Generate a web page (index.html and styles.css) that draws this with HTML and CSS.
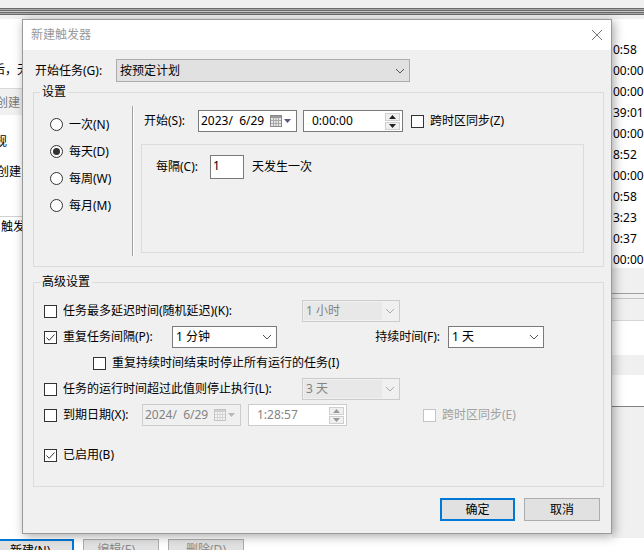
FILE: index.html
```html
<!DOCTYPE html>
<html lang="zh-CN">
<head>
<meta charset="utf-8">
<title>新建触发器</title>
<link rel="stylesheet" href="styles.css">
</head>
<body>
<div class="bgwin">
  <div class="bg-top"><div class="bg-stripes"></div></div>
  <div class="bg-left">
    <span class="bl bl-1">后，无</span>
    <div class="bl-band"><span>创建</span></div>
    <span class="bl bl-3">规</span>
    <span class="bl bl-4">创建</span>
    <div class="bl-line"></div>
    <span class="bl bl-5">触发</span>
  </div>
  <div class="bg-right">
    <span>0:58</span><span>00:00</span><span>00:00</span><span>39:01</span><span>00:00</span><span>8:52</span><span>00:00</span><span>0:58</span><span>3:23</span><span>0:37</span><span>00:00</span>
  </div>
  <div class="bg-right-lower">
    <div class="brl-line1"></div>
    <div class="brl-line2"></div>
    <div class="brl-white1"></div>
    <div class="brl-white2"></div>
  </div>
  <div class="bg-buttons">
    <div class="bgbtn bgbtn-default">新建(N)...</div>
    <div class="bgbtn">编辑(E)...</div>
    <div class="bgbtn">删除(D)</div>
  </div>
</div>

<div class="dialog">
  <div class="titlebar">
    <span class="title">新建触发器</span>
    <svg class="close" width="12" height="12" viewBox="0 0 12 12"><path d="M1 1L11 11M11 1L1 11" stroke="#777" stroke-width="1" fill="none"/></svg>
  </div>
  <div class="dlg-body">
    <div class="start-row">
      <span class="start-label">开始任务(G):</span>
      <div class="combo combo-main"><span class="combo-text">按预定计划</span><svg class="chev" width="10" height="6" viewBox="0 0 10 6"><path d="M1 1L5 5L9 1" stroke="#555" fill="none"/></svg></div>
    </div>

    <fieldset class="group group-settings">
      <legend>设置</legend>
      <div class="settings">
        <div class="freq">
          <div class="radio-row"><span class="radio"></span><span>一次(N)</span></div>
          <div class="radio-row"><span class="radio on"></span><span>每天(D)</span></div>
          <div class="radio-row"><span class="radio"></span><span>每周(W)</span></div>
          <div class="radio-row"><span class="radio"></span><span>每月(M)</span></div>
        </div>
        <div class="sep"></div>
        <div class="sched">
          <div class="sched-start">
            <span class="lbl-start">开始(S):</span>
            <div class="datebox">
              <span class="dt-text">2023/&nbsp; 6/29</span>
              <svg class="cal" width="22" height="12" viewBox="0 0 22 12"><rect x="0.5" y="0.5" width="11" height="11" fill="#e8e8e8" stroke="#8a8a8a"/><rect x="1" y="1" width="10" height="2" fill="#9a9a9a"/><path d="M1 5.5H11M1 8.5H11M3.5 3V11M6 3V11M8.5 3V11" stroke="#a8a8a8" stroke-width="1"/><path d="M14 4H21L17.5 8Z" fill="#4e5d7c"/></svg>
            </div>
            <div class="timebox">
              <span class="dt-text">0:00:00</span>
              <div class="spin"><span class="spin-btn"><svg width="7" height="4" viewBox="0 0 7 4"><path d="M0 4H7L3.5 0Z" fill="#222"/></svg></span><span class="spin-btn"><svg width="7" height="4" viewBox="0 0 7 4"><path d="M0 0H7L3.5 4Z" fill="#222"/></svg></span></div>
            </div>
            <span class="check ml-tz"></span>
            <span class="ck-label">跨时区同步(Z)</span>
          </div>
          <div class="recur">
            <div class="recur-row">
              <span class="lbl-every">每隔(C):</span>
              <div class="numbox">1</div>
              <span class="recur-tail">天发生一次</span>
            </div>
          </div>
        </div>
      </div>
    </fieldset>

    <fieldset class="group group-adv">
      <legend>高级设置</legend>
      <div class="adv">
        <div class="adv-row">
          <span class="check"></span>
          <span class="ck-label w239">任务最多延迟时间(随机延迟)(K):</span>
          <div class="combo combo-dis w98"><span class="combo-field">1 小时</span><svg class="chev" width="10" height="6" viewBox="0 0 10 6"><path d="M1 1L5 5L9 1" stroke="#aaa" fill="none"/></svg></div>
        </div>
        <div class="adv-row">
          <span class="check"><svg width="11" height="11" viewBox="0 0 11 11"><path d="M1.5 5.5L4.2 8.3L9.5 2.5" stroke="#333" fill="none" stroke-width="1"/></svg></span>
          <span class="ck-label w109">重复任务间隔(P):</span>
          <div class="combo combo-on w105"><span class="combo-text">1 分钟</span><svg class="chev" width="10" height="6" viewBox="0 0 10 6"><path d="M1 1L5 5L9 1" stroke="#555" fill="none"/></svg></div>
          <span class="dur-label">持续时间(F):</span>
          <div class="combo combo-on w96"><span class="combo-text">1 天</span><svg class="chev" width="10" height="6" viewBox="0 0 10 6"><path d="M1 1L5 5L9 1" stroke="#555" fill="none"/></svg></div>
        </div>
        <div class="adv-row">
          <span class="check ml-sub"></span>
          <span class="ck-label">重复持续时间结束时停止所有运行的任务(I)</span>
        </div>
        <div class="adv-row">
          <span class="check"></span>
          <span class="ck-label w239">任务的运行时间超过此值则停止执行(L):</span>
          <div class="combo combo-dis w98"><span class="combo-field">3 天</span><svg class="chev" width="10" height="6" viewBox="0 0 10 6"><path d="M1 1L5 5L9 1" stroke="#aaa" fill="none"/></svg></div>
        </div>
        <div class="adv-row">
          <span class="check"></span>
          <span class="ck-label w79">到期日期(X):</span>
          <div class="datebox dis">
            <span class="dt-text">2024/&nbsp; 6/29</span>
            <svg class="cal" width="22" height="12" viewBox="0 0 22 12"><rect x="0.5" y="0.5" width="11" height="11" fill="#f4f4f4" stroke="#c4c4c4"/><rect x="1" y="1" width="10" height="2" fill="#cfcfcf"/><path d="M1 5.5H11M1 8.5H11M3.5 3V11M6 3V11M8.5 3V11" stroke="#d4d4d4" stroke-width="1"/><path d="M14 4H21L17.5 8Z" fill="#b8b8b8"/></svg>
          </div>
          <div class="timebox dis">
            <span class="dt-text">1:28:57</span>
            <div class="spin"><span class="spin-btn"><svg width="7" height="4" viewBox="0 0 7 4"><path d="M0 4H7L3.5 0Z" fill="#999"/></svg></span><span class="spin-btn"><svg width="7" height="4" viewBox="0 0 7 4"><path d="M0 0H7L3.5 4Z" fill="#999"/></svg></span></div>
          </div>
          <span class="check dis ml-exp"></span>
          <span class="ck-label dis-text">跨时区同步(E)</span>
        </div>
        <div class="adv-row enabled-row">
          <span class="check"><svg width="11" height="11" viewBox="0 0 11 11"><path d="M1.5 5.5L4.2 8.3L9.5 2.5" stroke="#333" fill="none" stroke-width="1"/></svg></span>
          <span class="ck-label">已启用(B)</span>
        </div>
      </div>
    </fieldset>

    <div class="btn-row">
      <div class="btn btn-default">确定</div>
      <div class="btn">取消</div>
    </div>
  </div>
</div>
</body>
</html>
```

FILE: styles.css
```css
* { box-sizing: border-box; }
body {
  margin: 0;
  width: 644px;
  height: 550px;
  overflow: hidden;
  position: relative;
  background: #ffffff;
  font-family: "Noto Sans", "Noto Sans CJK SC", sans-serif;
  font-size: 12px;
  line-height: 16px;
  color: #000;
}

/* ---------- background window ---------- */
.bgwin { position: absolute; left: 0; top: 0; width: 644px; height: 550px; }
.bg-top { height: 19px; background: #f0f0f0; padding-top: 8px; }
.bg-stripes {
  height: 7px;
  background: repeating-linear-gradient(#6b6b6b 0 1px, #a8a8a8 1px 2px, #6b6b6b 2px 3px, #c8c8c8 3px 4px);
}
.bg-left { position: absolute; left: 0; top: 19px; width: 22px; height: 515px; overflow: hidden; }
.bl { position: absolute; white-space: nowrap; }
.bl-1 { left: -7px; top: 43px; }
.bl-band { position: absolute; left: 0; top: 69px; width: 22px; height: 27px; background: #f0f0f0; border-top: 1px solid #d9d9d9; color: #7a7a7a; padding: 6px 0 0 0; white-space: nowrap; overflow: hidden; }
.bl-band span { margin-left: -4px; }
.bl-3 { left: -5px; top: 115px; }
.bl-4 { left: -3px; top: 145px; }
.bl-line { position: absolute; left: 0; top: 197px; width: 22px; height: 1px; background: #d0d0d0; }
.bl-5 { left: 1px; top: 200px; }

.bg-right { position: absolute; left: 612px; top: 40px; width: 32px; display: flex; flex-direction: column; }
.bg-right span { height: 21px; line-height: 19px; padding-left: 1px; white-space: nowrap; }
.bg-right-lower { position: absolute; left: 612px; top: 268px; width: 32px; height: 270px; background: #f0f0f0; }
.brl-line1 { position: absolute; left: 0; top: 25px; width: 32px; height: 1px; background: #a0a0a0; }
.brl-line2 { position: absolute; left: 0; top: 30px; width: 32px; height: 1px; background: #c4c4c4; }
.brl-white1 { position: absolute; left: 0; top: 52px; width: 32px; height: 35px; background: #fff; border-top: 1px solid #d4d4d4; }
.brl-white2 { position: absolute; left: 0; top: 107px; width: 32px; height: 32px; background: #fff; border-bottom: 1px solid #808080; }
.bg-buttons { position: absolute; left: -4px; top: 539px; display: flex; gap: 9px; }
.bgbtn { width: 76px; height: 23px; background: #e1e1e1; border: 1px solid #adadad; text-align: center; line-height: 20px; color: #8a8a8a; }
.bgbtn-default { border: 2px solid #0078d7; color: #000; width: 78px; }

/* ---------- dialog ---------- */
.dialog {
  position: absolute;
  left: 22px;
  top: 19px;
  width: 590px;
  height: 515px;
  background: #f0f0f0;
  border: 1px solid #9a9a9a;
  box-shadow: 2px 2px 10px rgba(0, 0, 0, 0.35);
}
.titlebar {
  height: 30px;
  background: #fff;
  display: flex;
  align-items: center;
  justify-content: space-between;
  padding: 0 8px 0 8px;
}
.title { color: #999; }

.dlg-body { padding: 9px 10px 0 10px; }
.start-row { display: flex; align-items: center; padding-left: 2px; height: 23px; }
.start-label { width: 81px; }
.combo {
  height: 22px;
  display: flex;
  align-items: center;
  justify-content: space-between;
  padding: 0 4px 0 3px;
  border: 1px solid #7a7a7a;
  background: #fff;
}
.combo-main { width: 294px; height: 23px; background: #e1e1e1; border-color: #adadad; }
.chev { flex: none; }
.combo-dis { border-color: #cccccc; background: #f0f0f0; padding: 0 4px 0 0; }
.combo-field { color: #838383; background: #e8e8e8; height: 18px; line-height: 18px; width: 78px; padding-left: 2px; margin-left: 1px; }
.w98 { width: 98px; }
.w105 { width: 105px; }
.w96 { width: 96px; }

/* group boxes */
.group {
  margin: 0;
  padding: 0;
  min-width: 0;
  border: 1px solid #dcdcdc;
  width: 571px;
}
.group legend { padding: 0 2px; margin-left: 6px; line-height: 16px; }
.group-settings { margin-top: 2px; height: 183px; }
.group-adv { margin-top: 7px; height: 213px; }

.settings { display: flex; height: 166px; }
.freq { width: 98px; padding: 11px 0 0 16px; }
.radio-row { height: 27px; display: flex; align-items: center; gap: 6px; }
.radio {
  width: 13px; height: 13px; border-radius: 50%;
  border: 1px solid #333; background: #fff;
  display: flex; align-items: center; justify-content: center;
}
.radio.on::after { content: ""; width: 7px; height: 7px; border-radius: 50%; background: #333; }
.sep { margin-top: 6px; height: 150px; width: 2px; border-left: 1px solid #a0a0a0; border-right: 1px solid #fff; }
.sched { flex: 1; padding-left: 10px; }
.sched-start { margin-top: 10px; height: 22px; display: flex; align-items: center; }
.lbl-start { width: 54px; }
.datebox {
  width: 99px; height: 22px;
  border: 1px solid #7a7a7a; background: #fff;
  display: flex; align-items: center; justify-content: space-between;
  padding: 0 4px 0 2px;
}
.datebox.dis { border-color: #cccccc; background: #f0f0f0; color: #838383; }
.timebox {
  width: 100px; height: 22px; margin-left: 6px;
  border: 1px solid #7a7a7a; background: #fff;
  display: flex; align-items: center; justify-content: space-between;
  padding: 0 2px 0 8px;
}
.timebox.dis { width: 99px; margin-left: 7px; border-color: #cccccc; color: #838383; padding-left: 8px; }
.spin { display: flex; flex-direction: column; gap: 1px; }
.spin-btn {
  width: 15px; height: 8px;
  background: #f0f0f0; border: 1px solid #cfcfcf;
  display: flex; align-items: center; justify-content: center;
}
.check {
  width: 13px; height: 13px; flex: none;
  border: 1px solid #333; background: #fff;
  display: flex; align-items: center; justify-content: center;
}
.check.dis { border-color: #c4c4c4; }
.ml-tz { margin-left: 8px; }
.ck-label { margin-left: 6px; white-space: nowrap; }
.dis-text { color: #a0a0a0; }

.recur {
  margin: 12px 0 0 -3px;
  width: 443px; height: 109px;
  border: 1px solid #dcdcdc;
  padding: 10px 0 0 14px;
}
.recur-row { display: flex; align-items: center; height: 24px; }
.lbl-every { width: 54px; }
.numbox { width: 34px; height: 24px; border: 1px solid #7a7a7a; background: #fff; padding-left: 2px; line-height: 20px; }
.recur-tail { margin-left: 8px; }

.adv { padding: 8px 0 0 10px; }
.adv-row { height: 26px; display: flex; align-items: center; }
.w239 { width: 239px; }
.w109 { width: 109px; }
.w79 { width: 79px; }
.dur-label { width: 171px; text-align: right; padding-right: 8px; }
.ml-sub { margin-left: 49px; }
.ml-exp { margin-left: 76px; }
.enabled-row { margin-top: 14px; }

.btn-row { display: flex; justify-content: flex-end; gap: 9px; margin-top: 11px; padding-right: 1px; }
.btn {
  width: 76px; height: 23px;
  background: #e1e1e1; border: 1px solid #adadad;
  text-align: center; line-height: 21px;
}
.btn-default { width: 75px; border: 2px solid #0078d7; line-height: 19px; }
```
